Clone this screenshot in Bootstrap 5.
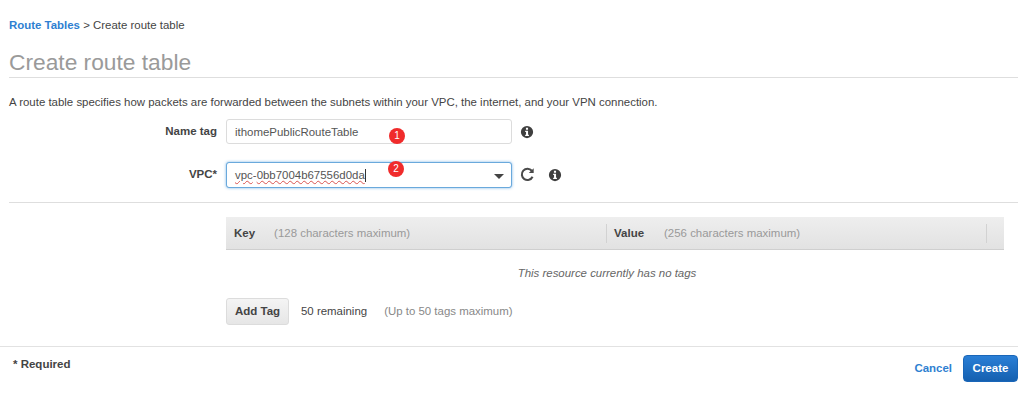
<!DOCTYPE html>
<html lang="en">
<head>
  <meta charset="UTF-8">
  <title>Create route table</title>
  <meta name="viewport" content="width=device-width, initial-scale=1">
  <link href="https://cdn.jsdelivr.net/npm/bootstrap@5.3.0/dist/css/bootstrap.min.css" rel="stylesheet">
  <style>
    body { font-family: "Liberation Sans", Arial, sans-serif; font-size: 11.45px; color: #444; background: #fff; overflow: hidden; }
    .page-wrap { height: 407px; padding: 0 6px 0 9px; }
    .crumbs { padding-top: 18px; height: 37px; line-height: 14px; }
    .crumbs a { color: #2f7fd1; font-weight: 700; text-decoration: none; }
    .page-title { font-size: 22.75px; font-weight: 400; line-height: 28px; color: #9a9a9a; margin: 11px 0 0; height: 30px; border-bottom: 1px solid #dedede; }
    .intro { margin: 17px 0 0; line-height: 14px; height: 14px; }
    .field-row { height: 25px; }
    .field-label { width: 217px; text-align: right; font-weight: 700; font-size: 11.5px; padding-right: 9px; color: #444; }
    .field-box { width: 286px; position: relative; }
    .name-row { margin-top: 10px; }
    .vpc-row { margin-top: 18px; }
    .name-input { height: 25px; min-height: 25px; font-size: 11.45px; padding: 0 8px; color: #555; border-color: #dcdcdc; border-radius: 3px; }
    .vpc-select { height: 26px; min-height: 26px; font-size: 11.45px; padding: 0 8px; line-height: 24px; color: #555; border-color: #6aa9dc; border-radius: 3px; box-shadow: 0 0 3px rgba(70, 150, 220, .7); }
    .spell { text-decoration: underline wavy #d9534f 1px; }
    .text-cursor { display: inline-block; width: 1px; height: 13px; background: #333; vertical-align: -3px; }
    .caret { position: absolute; right: 8px; top: 12px; border-left: 5px solid transparent; border-right: 5px solid transparent; border-top: 5px solid #444; }
    .step-dot { position: absolute; width: 16px; height: 16px; border-radius: 50%; background: #f02b2b; color: #fff; font-size: 10px; line-height: 16px; text-align: center; }
    .dot-one { left: 163px; top: 9px; }
    .dot-two { left: 162px; top: -1px; }
    .ico-info { color: #3f3f3f; width: 14px; height: 14px; }
    .ico-refresh { color: #4a4a4a; width: 15px; height: 15px; }
    .ico-gap { margin-left: 13px; }
    .form-rule { border-top: 1px solid #dedede; margin: 15px 0 14px; }
    .tags-area { margin-left: 217px; margin-right: 14px; }
    .tags-head { height: 33px; background: linear-gradient(#eeeeee, #e2e2e2); border-bottom: 1px solid #cfcfcf; }
    .head-cell { height: 19px; line-height: 19px; }
    .key-cell { width: 380px; padding-left: 8px; }
    .value-cell { flex: 1; padding-left: 7px; border-left: 1px solid #d2d2d2; border-right: 1px solid #d2d2d2; margin-right: 17px; }
    .head-name { font-weight: 700; color: #444; font-size: 11.5px; }
    .head-hint { color: #999; }
    .key-cell .head-hint { margin-left: 19px; }
    .value-cell .head-hint { margin-left: 20px; }
    .no-tags { text-align: center; font-style: italic; color: #666; line-height: 14px; margin: 16px 0 18px; padding-right: 16px; }
    .add-btn { width: 63px; height: 27px; padding: 0; font-size: 11.5px; font-weight: 700; color: #444; background: linear-gradient(#f4f4f4, #e6e6e6); border: 1px solid #dcdcdc; border-radius: 3px; }
    .muted-note { color: #888; margin-left: 17px; }
    .foot-bar { border-top: 1px solid #e2e2e2; margin: 21px 0 0 -9px; height: 40px; padding: 8px 0 0 13px; }
    .req-note { font-weight: 700; font-size: 11.5px; color: #444; margin-top: 1px; }
    .cancel-link { color: #2f7fd1; font-weight: 700; text-decoration: none; margin-right: 3px; }
    .create-btn { width: 55px; height: 27px; padding: 0; font-size: 11.5px; font-weight: 700; color: #fff; background: linear-gradient(#2a7fd6, #1560b0); border: 1px solid #1a66b8; border-radius: 4px; }
  </style>
</head>
<body>
  <div class="page-wrap">
    <div class="crumbs"><a href="#">Route Tables</a> &gt; Create route table</div>
    <h1 class="page-title">Create route table</h1>
    <p class="intro">A route table specifies how packets are forwarded between the subnets within your VPC, the internet, and your VPN connection.</p>

    <div class="d-flex align-items-center field-row name-row">
      <div class="field-label">Name tag</div>
      <div class="field-box">
        <input type="text" class="form-control name-input" value="ithomePublicRouteTable">
        <span class="step-dot dot-one">1</span>
      </div>
      <svg class="ico-info ms-2" viewBox="0 0 16 16" fill="currentColor"><path fill-rule="evenodd" d="M8 1a7 7 0 1 0 0 14A7 7 0 0 0 8 1zM6.8 3.2h2.4v2.2H6.8zM5.9 6.6h3.3v4.6h1v1.4H5.9v-1.4h1V8H5.9z"/></svg>
    </div>

    <div class="d-flex align-items-center field-row vpc-row">
      <div class="field-label">VPC*</div>
      <div class="field-box">
        <div class="form-control vpc-select"><span class="spell">vpc</span>-<span class="spell">0bb7004b67556d0da</span><span class="text-cursor"></span></div>
        <span class="caret"></span>
        <span class="step-dot dot-two">2</span>
      </div>
      <svg class="ico-refresh ms-2" viewBox="0 0 16 16" fill="none" stroke="currentColor" stroke-width="2.2"><path d="M13.4 10.4A6 6 0 1 1 12.6 4"/><path d="M14.6 1.2v5.2H9.4z" fill="currentColor" stroke="none"/></svg>
      <svg class="ico-info ico-gap" viewBox="0 0 16 16" fill="currentColor"><path fill-rule="evenodd" d="M8 1a7 7 0 1 0 0 14A7 7 0 0 0 8 1zM6.8 3.2h2.4v2.2H6.8zM5.9 6.6h3.3v4.6h1v1.4H5.9v-1.4h1V8H5.9z"/></svg>
    </div>

    <div class="form-rule"></div>

    <div class="tags-area">
      <div class="tags-head d-flex align-items-center">
        <div class="head-cell key-cell"><span class="head-name">Key</span><span class="head-hint">(128 characters maximum)</span></div>
        <div class="head-cell value-cell"><span class="head-name">Value</span><span class="head-hint">(256 characters maximum)</span></div>
      </div>
      <div class="no-tags">This resource currently has no tags</div>
      <div class="d-flex align-items-center">
        <button type="button" class="btn add-btn">Add Tag</button>
        <span class="ms-2 ps-1">50 remaining</span>
        <span class="muted-note">(Up to 50 tags maximum)</span>
      </div>
    </div>

    <div class="foot-bar d-flex justify-content-between align-items-start">
      <div class="req-note">* Required</div>
      <div class="d-flex align-items-center gap-2">
        <a href="#" class="cancel-link">Cancel</a>
        <button type="button" class="btn create-btn">Create</button>
      </div>
    </div>
  </div>
</body>
</html>
